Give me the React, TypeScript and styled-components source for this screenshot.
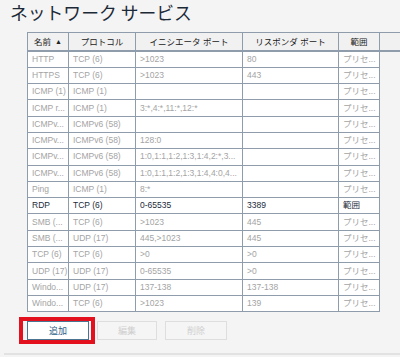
import React from "react";
import styled, { createGlobalStyle } from "styled-components";

const Global = createGlobalStyle`
  html, body { margin: 0; padding: 0; background: #f4f4f4; }
  body { width: 400px; height: 357px; overflow: hidden; font-family: "Liberation Sans", "Noto Sans CJK JP", sans-serif; }
`;

const Page = styled.div`
  display: flex;
  flex-direction: column;
  width: 400px;
  height: 357px;
  background: #f4f4f4;
`;

const Title = styled.h1`
  margin: -1.5px 0 0 10px;
  font-family: "Noto Sans CJK JP", sans-serif;
  font-weight: 400;
  font-size: 17.8px;
  line-height: 26px;
  color: #1c2a38;
  white-space: nowrap;
`;

const Table = styled.div`
  margin: 7.5px 0 0 27px;
  display: flex;
  flex-direction: column;
`;

const HeaderRow = styled.div`
  display: grid;
  grid-template-columns: 41px 67px 107px 96px 41px 1fr;
  height: 18.5px;
  border-top: 1px solid #8f9cab;
  border-left: 1px solid #8f9cab;
  background: #f1f1f1;
`;

const HeaderCell = styled.div<{ $filler?: boolean }>`
  box-sizing: border-box;
  border-right: ${(p) => (p.$filler ? "none" : "1px solid #8f9cab")};
  border-bottom: 2px solid #8f9cab;
  color: #222;
  font-size: 8.5px;
  display: flex;
  align-items: center;
  justify-content: center;
  white-space: nowrap;
  overflow: hidden;
`;

const Arrow = styled.span`
  margin-left: 4px;
  font-size: 7px;
`;

const Body = styled.div`
  width: 352px;
  box-sizing: border-box;
  display: grid;
  grid-template-columns: 41px 67px 107px 96px 41px;
  grid-auto-rows: 16.3px;
  border-left: 1px solid #8f9cab;
  background: #fff;
`;

const Cell = styled.div<{ $active?: boolean }>`
  box-sizing: border-box;
  border-right: 1px solid #8f9cab;
  border-bottom: 1px solid #8f9cab;
  color: ${(p) => (p.$active ? "#1b2a3a" : "#a4a4a4")};
  font-size: 8.5px;
  line-height: 15px;
  padding: 0 0 0 4px;
  display: flex;
  align-items: center;
  white-space: nowrap;
  overflow: hidden;
  min-width: 0;
`;

const ButtonRow = styled.div`
  display: flex;
  gap: 8px;
  margin: 8.3px 0 0 27px;
`;

const Highlight = styled.div`
  position: relative;
  display: flex;
  &::after {
    content: "";
    position: absolute;
    left: -8px;
    right: -6px;
    top: -4px;
    bottom: -4px;
    border: 4px solid #e3101e;
    pointer-events: none;
  }
`;

const Button = styled.button<{ $w: number; $primary?: boolean }>`
  width: ${(p) => p.$w}px;
  height: 19.5px;
  box-sizing: border-box;
  margin: 0;
  padding: 0;
  font-family: "Noto Sans CJK JP", sans-serif;
  font-size: 9px;
  line-height: 1;
  background: ${(p) => (p.$primary ? "#ffffff" : "#f5f5f5")};
  border: 1px solid ${(p) => (p.$primary ? "#4b7392" : "#dedede")};
  color: ${(p) => (p.$primary ? "#2b5d86" : "#cfcfcf")};
  display: flex;
  align-items: center;
  justify-content: center;
`;

const Footer = styled.div`
  margin: 13px 0 0 4px;
  border-top: 2px solid #e2e2e2;
  flex: 1;
`;

type Row = [string, string, string, string, string, boolean?];

const rows: Row[] = [
  ["HTTP", "TCP (6)", ">1023", "80", "プリセ..."],
  ["HTTPS", "TCP (6)", ">1023", "443", "プリセ..."],
  ["ICMP (1)", "ICMP (1)", "", "", "プリセ..."],
  ["ICMP r...", "ICMP (1)", "3:*,4:*,11:*,12:*", "", "プリセ..."],
  ["ICMPv...", "ICMPv6 (58)", "", "", "プリセ..."],
  ["ICMPv...", "ICMPv6 (58)", "128:0", "", "プリセ..."],
  ["ICMPv...", "ICMPv6 (58)", "1:0,1:1,1:2,1:3,1:4,2:*,3...", "", "プリセ..."],
  ["ICMPv...", "ICMPv6 (58)", "1:0,1:1,1:2,1:3,1:4,4:0,4...", "", "プリセ..."],
  ["Ping", "ICMP (1)", "8:*", "", "プリセ..."],
  ["RDP", "TCP (6)", "0-65535", "3389", "範囲", true],
  ["SMB (...", "TCP (6)", ">1023", "445", "プリセ..."],
  ["SMB (...", "UDP (17)", "445,>1023", "445", "プリセ..."],
  ["TCP (6)", "TCP (6)", ">0", ">0", "プリセ..."],
  ["UDP (17)", "UDP (17)", "0-65535", ">0", "プリセ..."],
  ["Windo...", "UDP (17)", "137-138", "137-138", "プリセ..."],
  ["Windo...", "TCP (6)", ">1023", "139", "プリセ..."],
];

export default function App() {
  return (
    <>
      <Global />
      <Page>
        <Title>ネットワーク サービス</Title>
        <Table>
          <HeaderRow>
            <HeaderCell>
              名前<Arrow>▲</Arrow>
            </HeaderCell>
            <HeaderCell>プロトコル</HeaderCell>
            <HeaderCell>イニシエータ ポート</HeaderCell>
            <HeaderCell>リスポンダ ポート</HeaderCell>
            <HeaderCell>範囲</HeaderCell>
            <HeaderCell $filler />
          </HeaderRow>
          <Body>
            {rows.map((r, i) =>
              r.slice(0, 5).map((c, j) => (
                <Cell key={`${i}-${j}`} $active={!!r[5]}>
                  {c as string}
                </Cell>
              ))
            )}
          </Body>
        </Table>
        <ButtonRow>
          <Highlight>
            <Button $w={62} $primary>
              追加
            </Button>
          </Highlight>
          <Button $w={60} disabled>
            編集
          </Button>
          <Button $w={62} disabled>
            削除
          </Button>
        </ButtonRow>
        <Footer />
      </Page>
    </>
  );
}
